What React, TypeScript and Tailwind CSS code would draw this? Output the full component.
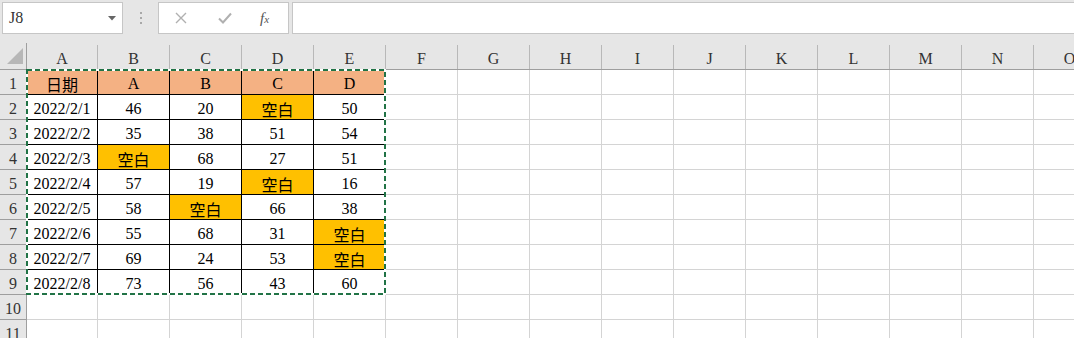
import React from "react";

const latin = "font-['Liberation_Serif',serif]";
const cjk = "font-['Noto_Sans_CJK_TC',sans-serif]";

const columns = ["A", "B", "C", "D", "E", "F", "G", "H", "I", "J", "K", "L", "M", "N", "O"];

const data: string[][] = [
  ["日期", "A", "B", "C", "D"],
  ["2022/2/1", "46", "20", "空白", "50"],
  ["2022/2/2", "35", "38", "51", "54"],
  ["2022/2/3", "空白", "68", "27", "51"],
  ["2022/2/4", "57", "19", "空白", "16"],
  ["2022/2/5", "58", "空白", "66", "38"],
  ["2022/2/6", "55", "68", "31", "空白"],
  ["2022/2/7", "69", "24", "53", "空白"],
  ["2022/2/8", "73", "56", "43", "60"],
];

function colWidth(index: number) {
  return index === 0 ? "w-[71px]" : "w-[72px]";
}

function isCjk(text: string) {
  return /[\u4e00-\u9fff]/.test(text);
}

function FormulaBar() {
  return (
    <div className="flex h-[43px] items-start bg-[#e6e6e6] pt-[2px]">
      <div className="ml-[2px] flex h-[32px] w-[121px] items-center justify-between border border-[#c6c6c6] bg-white pl-[6px] pr-[6px]">
        <span className={`${latin} text-[16px] text-[#333]`}>J8</span>
        <svg width="8" height="5" viewBox="0 0 8 5">
          <path d="M0 0h8L4 4.5z" fill="#666" />
        </svg>
      </div>
      <div className="flex h-[32px] w-[35px] flex-col items-center justify-center gap-[3px]">
        <span className="h-[2px] w-[2px] bg-[#a8a8a8]" />
        <span className="h-[2px] w-[2px] bg-[#a8a8a8]" />
        <span className="h-[2px] w-[2px] bg-[#a8a8a8]" />
      </div>
      <div className="flex h-[32px] w-[131px] items-center border border-[#c6c6c6] bg-white">
        <svg className="ml-[16px]" width="12" height="12" viewBox="0 0 12 12">
          <path d="M1 1l10 10M11 1L1 11" stroke="#b0b0b0" strokeWidth="1.4" />
        </svg>
        <svg className="ml-[31px]" width="14" height="12" viewBox="0 0 14 12">
          <path d="M1 6.5l4 4L13 1.5" stroke="#b0b0b0" strokeWidth="2" fill="none" />
        </svg>
        <span className={`ml-[28px] ${latin} text-[15px] italic text-[#555]`}>
          f<span className="text-[11px]">x</span>
        </span>
      </div>
      <div className="ml-[3px] h-[32px] flex-1 border border-r-0 border-[#c6c6c6] bg-white" />
    </div>
  );
}

function HeaderRow() {
  return (
    <div className="flex h-[27px] bg-[#e6e6e6]">
      <div className="relative w-[27px] shrink-0 border-r border-b border-[#9e9e9e]">
        <svg className="absolute left-[7px] top-[5px]" width="16" height="16" viewBox="0 0 16 16">
          <path d="M16 0V16H0z" fill="#b7b7b7" />
        </svg>
      </div>
      {columns.map((c, i) => (
        <div
          key={c}
          className={`${colWidth(i)} shrink-0 border-b border-[#9e9e9e] pt-[2px]`}
        >
          <div
            className={`flex h-full items-center justify-center border-r border-[#b8b8b8] pt-[3px] ${latin} text-[16px] text-[#333]`}
          >
            {c}
          </div>
        </div>
      ))}
    </div>
  );
}

function Row({ n, cells }: { n: number; cells?: string[] }) {
  return (
    <div className="flex h-[25px]">
      <div
        className={`flex w-[27px] shrink-0 items-center justify-center border-r border-b border-[#9e9e9e] bg-[#e6e6e6] pt-[3px] ${latin} text-[16px] text-[#333]`}
      >
        {n}
      </div>
      {columns.map((c, i) => {
        const value = cells && i < 5 ? cells[i] : undefined;
        const inTable = cells !== undefined && i < 5;
        const blank = value === "空白";
        const fill = n === 1 && inTable ? "bg-[#f4b183]" : blank ? "bg-[#ffc000]" : "bg-white";
        const border = inTable ? "border-black" : "border-[#d4d4d4]";
        const font = value && isCjk(value) ? cjk : latin;
        return (
          <div
            key={c}
            className={`${colWidth(i)} flex shrink-0 items-center justify-center border-r border-b pt-[3px] ${border} ${fill} ${font} text-[16px] text-black`}
          >
            {value}
          </div>
        );
      })}
    </div>
  );
}

// copy marquee around A1:E9
function Marquee() {
  return (
    <svg
      className="pointer-events-none absolute left-[26px] top-[26px]"
      width="360"
      height="226"
      viewBox="0 0 360 226"
    >
      <rect x="1" y="1" width="358" height="224" fill="none" stroke="#ffffff" strokeWidth="2" />
      <rect
        x="1"
        y="1"
        width="358"
        height="224"
        fill="none"
        stroke="#217346"
        strokeWidth="2"
        strokeDasharray="5 3"
      />
    </svg>
  );
}

export default function App() {
  return (
    <div className="h-[338px] w-[1074px] overflow-hidden bg-white">
      <FormulaBar />
      <div className="relative w-[1200px]">
        <HeaderRow />
        {data.map((cells, r) => (
          <Row key={r} n={r + 1} cells={cells} />
        ))}
        <Row n={10} />
        <Row n={11} />
        <Marquee />
      </div>
    </div>
  );
}
